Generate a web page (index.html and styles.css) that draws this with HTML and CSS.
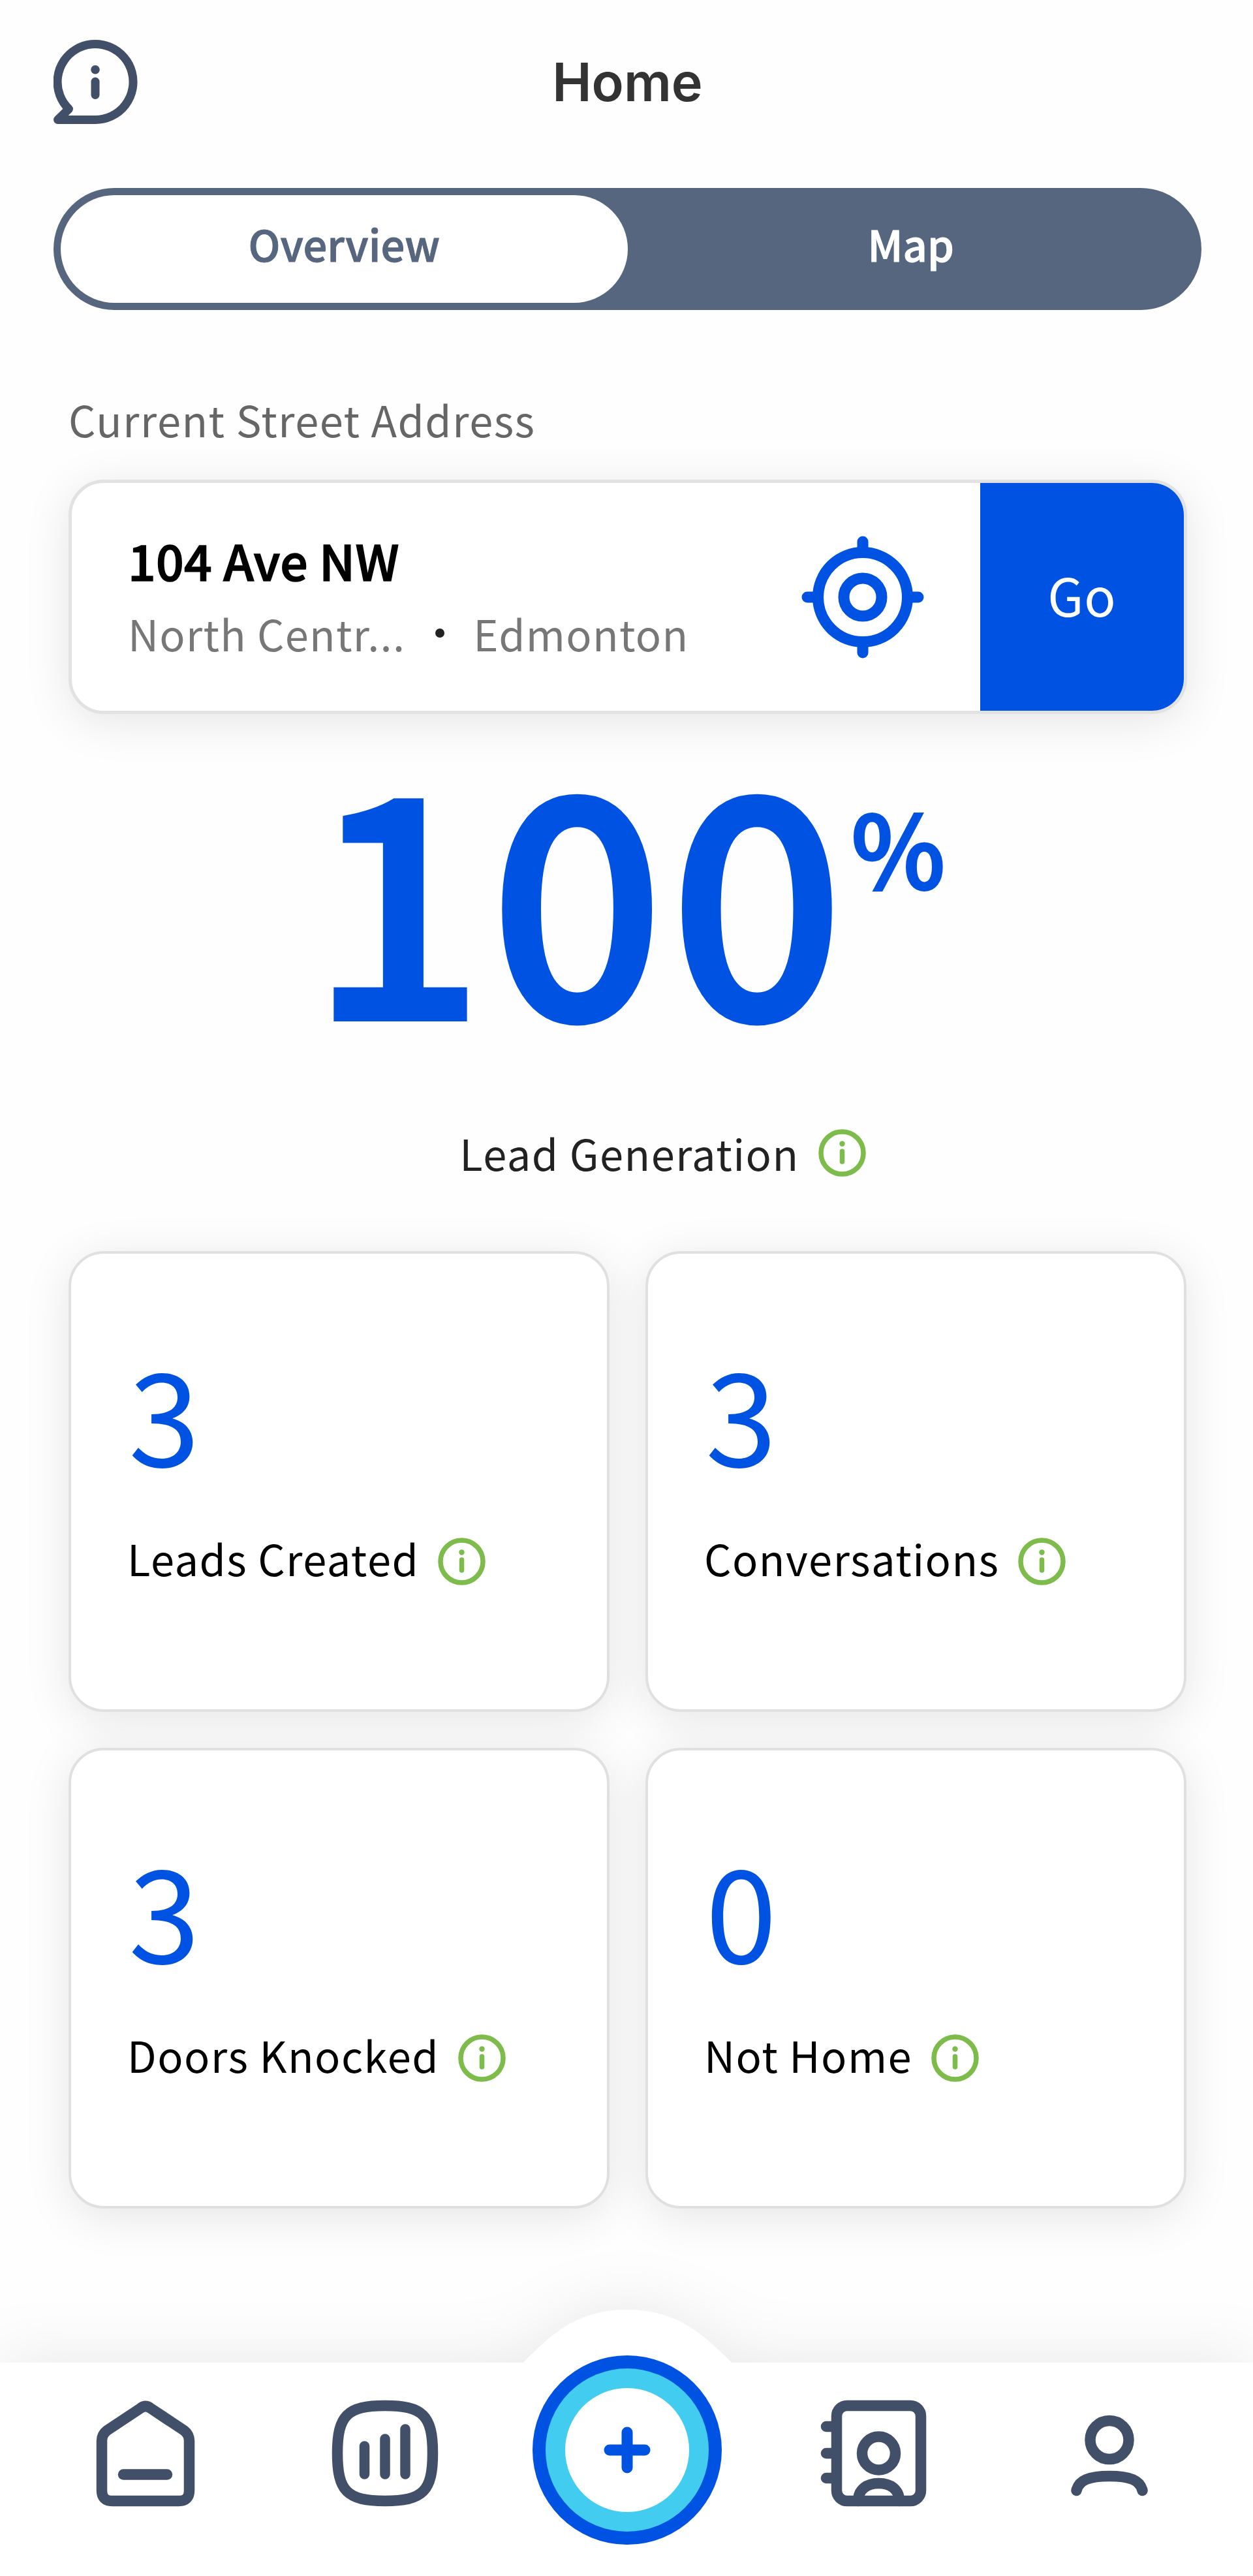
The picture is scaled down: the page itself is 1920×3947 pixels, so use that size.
FILE: index.html
```html
<!DOCTYPE html>
<html lang="en">
<head>
<meta charset="utf-8">
<title>Home</title>
<link rel="stylesheet" href="styles.css">
</head>
<body>
<svg class="defs" aria-hidden="true">
  <symbol id="info" viewBox="0 0 73 73">
    <circle cx="36.5" cy="36.5" r="32.500" fill="none" stroke="currentColor" stroke-width="7.500"/>
    <circle cx="36.5" cy="22.5" r="4.2" fill="currentColor"/>
    <path d="M36.5 34v16" stroke="currentColor" stroke-width="7.5" stroke-linecap="round"/>
  </symbol>
</svg>
<header class="header">
  <svg class="help" viewBox="0 0 130 130" fill="none" stroke="currentColor" stroke-width="13" stroke-linecap="round" stroke-linejoin="round">
    <path d="M64 123.500H6.500L23.500 107A58 58 0 1 1 64 123.500Z"/>
    <circle cx="64" cy="46.700" r="6.800" fill="currentColor" stroke="none"/>
    <path d="M64 65v20.500"/>
  </svg>
  <h1 class="title">Home</h1>
</header>
<nav class="tabs">
  <a class="tab tab-active">Overview</a>
  <a class="tab">Map</a>
</nav>
<main class="content">
  <p class="field-label">Current Street Address</p>
  <section class="address">
    <div class="place">
      <p class="street">104 Ave NW</p>
      <p class="area"><span>North Centr...</span><i class="dot"></i><span>Edmonton</span></p>
    </div>
    <svg class="locate" viewBox="0 0 188 188" fill="none" stroke="currentColor" stroke-width="17" stroke-linecap="round">
      <circle cx="94" cy="94" r="68.500"/>
      <circle cx="94" cy="94" r="29"/>
      <path d="M94 9v14M94 165v14M9 94h14M165 94h14"/>
    </svg>
    <button class="go">Go</button>
  </section>
  <section class="score">
    <p class="score-value">100<span class="percent">%</span></p>
    <p class="score-label"><span>Lead Generation</span><svg class="info"><use href="#info"/></svg></p>
  </section>
  <section class="stats">
    <article class="card"><p class="value">3</p><p class="label"><span>Leads Created</span><svg class="info"><use href="#info"/></svg></p></article>
    <article class="card"><p class="value">3</p><p class="label"><span>Conversations</span><svg class="info"><use href="#info"/></svg></p></article>
    <article class="card"><p class="value">3</p><p class="label"><span>Doors Knocked</span><svg class="info"><use href="#info"/></svg></p></article>
    <article class="card"><p class="value">0</p><p class="label"><span>Not Home</span><svg class="info"><use href="#info"/></svg></p></article>
  </section>
</main>
<footer class="bottom">
  <svg class="bar-shape" viewBox="0 0 1920 527" aria-hidden="true">
    <path d="M0 200H802C850 150 890 119 961 119S1072 150 1121 200H1920V527H0Z" fill="#fff"/>
  </svg>
  <div class="items">
    <svg class="icon" viewBox="0 0 180 180" fill="none" stroke="currentColor" stroke-width="16.500" stroke-linecap="round" stroke-linejoin="round">
      <path d="M83 20.500q7-5 14 0L149 55q8 6 8 16v76q0 16-16 16H39q-16 0-16-16V71q0-10 8-16Z"/>
      <path d="M56 122.500h67"/>
    </svg>
    <svg class="icon" viewBox="0 0 180 180" fill="none" stroke="currentColor" stroke-width="16.500" stroke-linecap="round">
      <path d="M90 17C148 17 163 32 163 90S148 163 90 163 17 148 17 90 32 17 90 17Z"/>
      <path d="M58.500 79v43M90 68v54M121 53v69" stroke-width="15.500"/>
    </svg>
    <svg class="add" viewBox="0 0 290 290">
      <circle cx="145" cy="145" r="145" fill="#0052e2"/>
      <circle cx="145" cy="145" r="125" fill="#42cdf0"/>
      <circle cx="145" cy="145" r="95" fill="#fff"/>
      <path d="M145 118v54M118 145h54" stroke="#0052e2" stroke-width="17" stroke-linecap="round"/>
    </svg>
    <svg class="icon" viewBox="0 0 180 180" fill="none" stroke="currentColor" stroke-width="16.500" stroke-linecap="round">
      <rect x="32" y="17" width="129" height="146" rx="16"/>
      <path d="M16 49h14M16 90h14M16 128h14"/>
      <circle cx="96.500" cy="90" r="25.500"/>
      <path d="M65 163c0-18 14-27 31.500-27s31.500 9 31.500 27"/>
    </svg>
    <svg class="icon" viewBox="0 0 180 180" fill="none" stroke="currentColor" stroke-width="16.500" stroke-linecap="round">
      <circle cx="90" cy="69.500" r="29.500"/>
      <path d="M39.500 147C43 131 59 125 90 125s47 6 50.500 22"/>
    </svg>
  </div>
</footer>
</body>
</html>
```
FILE: styles.css
```css
* { box-sizing: border-box; }
body {
  margin: 0;
  width: 1920px;
  height: 3947px;
  display: flex;
  flex-direction: column;
  background: #fefefe;
  color: #111;
  font-family: "Noto Sans CJK SC", "Noto Sans CJK JP", sans-serif;
  font-size: 65px;
  overflow: hidden;
}
p, h1 { margin: 0; }
.defs { display: none; }
svg { display: block; flex: none; }
.header {
  height: 288px;
  padding: 60px 82px 0;
  display: grid;
  grid-template-columns: 130px 1fr 130px;
  align-items: start;
}
.help { width: 130px; height: 130px; color: #414f68; }
.title {
  font: 600 81px/132px Inter, sans-serif;
  color: #333;
  text-align: center;
  padding-left: 3px;
}
.tabs {
  height: 187px;
  margin: 0 79px 0 82px;
  padding: 11px;
  border-radius: 94px;
  background: #56667f;
  display: flex;
  font-weight: 500;
  -webkit-text-stroke: 1px currentColor;
}
.tab {
  flex: 1;
  border-radius: 84px;
  color: #fff;
  text-align: center;
  line-height: 148px;
}
.tab-active { background: #fff; color: #56667f; }
.content { padding: 118px 101px 0 105px; }
.field-label { color: #666; line-height: 98px; height: 142px; letter-spacing: 1.5px; }
.address {
  height: 359px;
  border: 5px solid #e2e2e2;
  border-radius: 54px;
  background: #fff;
  box-shadow: 0 12px 70px rgba(0, 0, 0, .1);
  display: flex;
  align-items: center;
  overflow: hidden;
}
.place { flex: 1; padding-left: 86px; }
.street {
  height: 110px;
  font-weight: 500;
  font-size: 75px;
  line-height: 103px;
  letter-spacing: .3px;
  color: #000;
  -webkit-text-stroke: 1.5px currentColor;
}
.area { display: flex; align-items: center; line-height: 108px; color: #777; letter-spacing: 1.3px; }
.dot { width: 14px; height: 14px; border-radius: 50%; background: #222; margin: 0 44px 0 46px; }
.locate { width: 188px; height: 188px; color: #0052e2; margin-right: 86px; }
.go {
  width: 312px;
  align-self: stretch;
  border: 0;
  padding: 0 0 9px;
  background: #0052e2;
  color: #fff;
  font: 400 80px "Noto Sans CJK SC", sans-serif;
  letter-spacing: 1px;
}
.score { height: 823px; padding-top: 15px; text-align: center; }
.score-value {
  height: 500px;
  display: flex;
  justify-content: center;
  font-weight: 500;
  font-size: 466px;
  line-height: 497px;
  letter-spacing: 10px;
  color: #0052e2;
  -webkit-text-stroke: 8px currentColor;
}
.percent { font-size: 153px; line-height: 374px; letter-spacing: 0; padding-left: 2px; -webkit-text-stroke-width: 4px; }
.score-label, .label { display: flex; align-items: center; letter-spacing: 1.5px; line-height: 100px; }
.score-label { justify-content: center; color: #222; margin-top: 107px; padding-left: 107px; }
.info { width: 73px; height: 73px; margin-left: 29px; color: #7dbb4b; }
.stats { display: grid; grid-template-columns: 829px 829px; gap: 55px; }
.card {
  height: 706px;
  border: 4px solid #e0e0e0;
  border-radius: 54px;
  background: #fff;
  box-shadow: 0 12px 70px rgba(0, 0, 0, .1);
  padding: 95px 86px;
}
.value { color: #0052e2; font-size: 197px; line-height: 290px; padding-left: 2px; }
.label { color: #000; margin-top: 36px; height: 100px; }
.label span { height: 104px; line-height: 95px; }
.bottom { position: absolute; left: 0; top: 3420px; width: 1920px; height: 527px; overflow: hidden; }
.bar-shape { width: 1920px; height: 527px; filter: drop-shadow(0 0 50px rgba(0, 0, 0, .09)); }
.items {
  position: absolute;
  inset: 189px 0 0;
  padding-left: 40px;
  display: grid;
  grid-template-columns: 366px 367px 376px 382px 338px;
  justify-items: center;
  align-items: start;
}
.icon { width: 180px; height: 180px; margin-top: 60px; color: #414f68; }
.add { width: 290px; height: 290px; }
```
